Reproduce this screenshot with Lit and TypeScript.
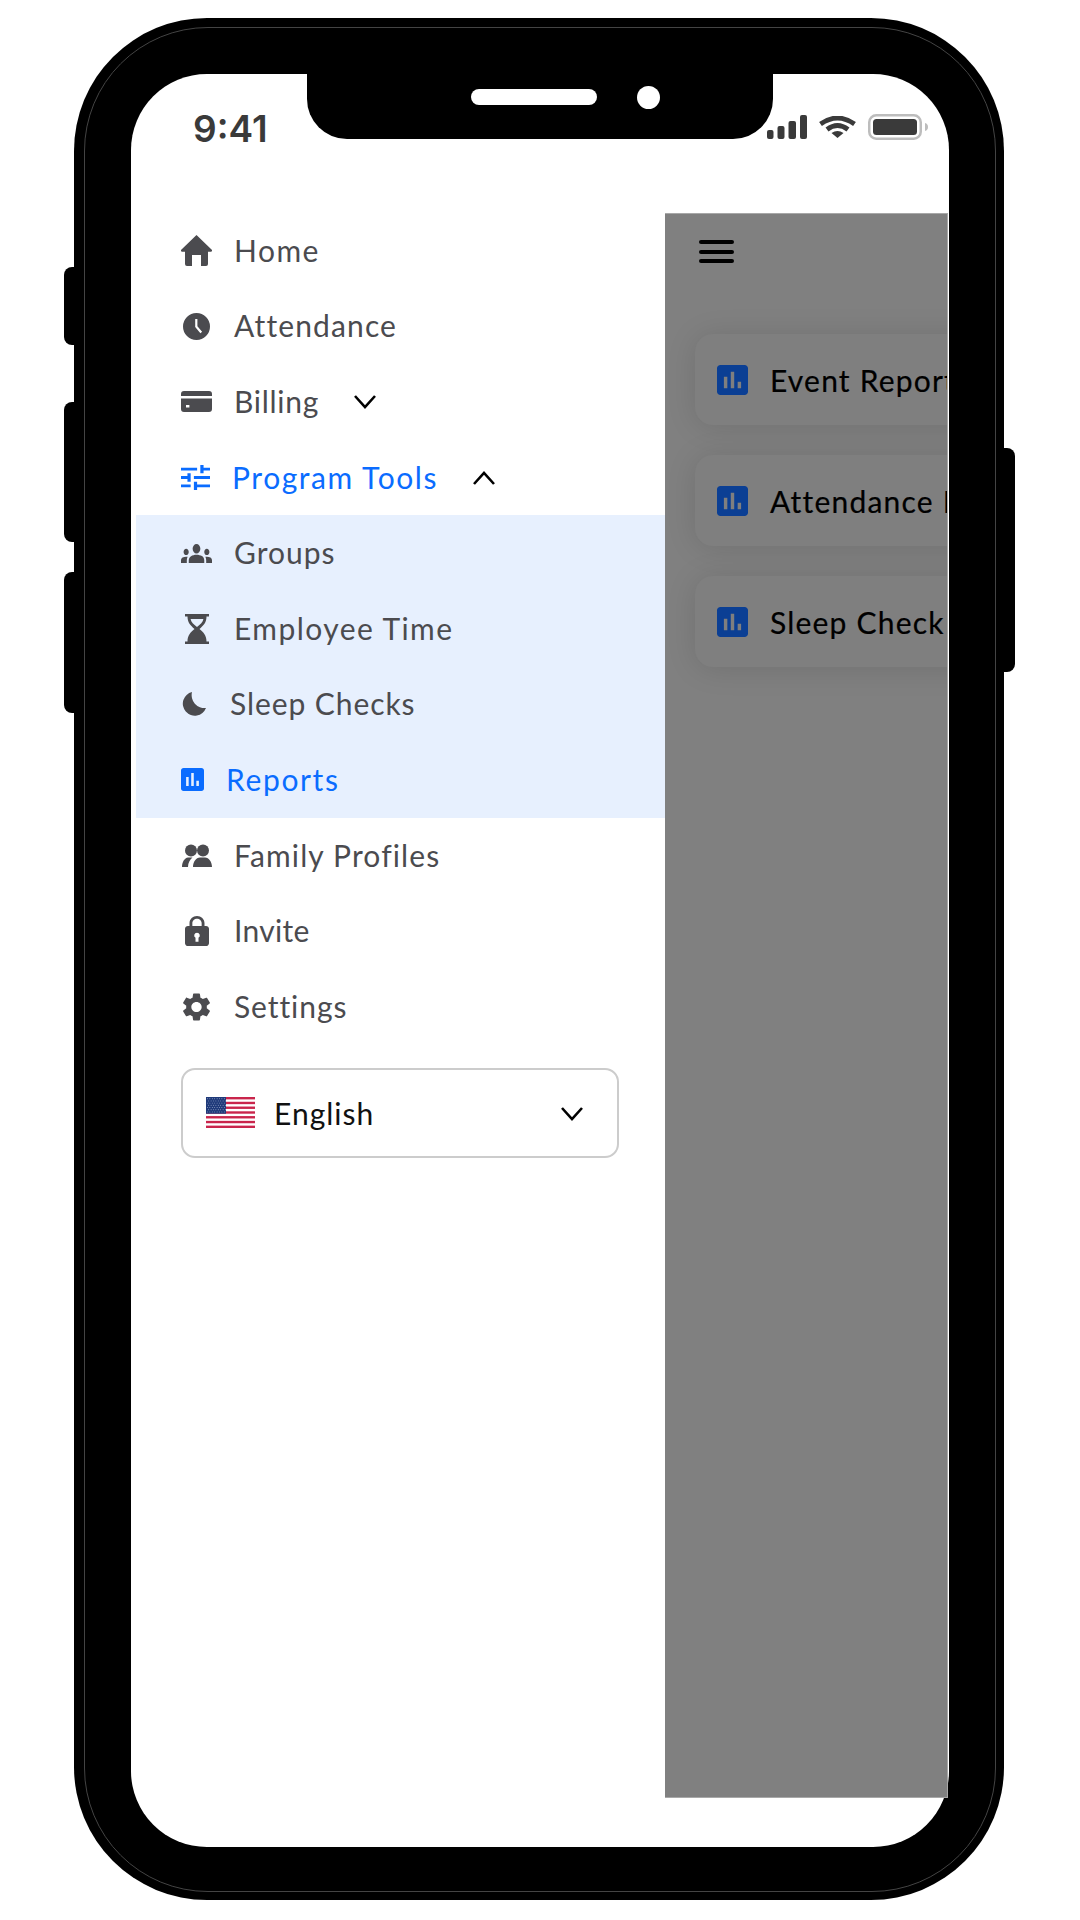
import { LitElement, html, css, svg } from 'lit';
import { customElement } from 'lit/decorators.js';

const homeIcon = svg`<path d="M15.500 0 30.500 14.500a1.200 1.200 0 0 1-.9 2.200H27V29a2 2 0 0 1-2 2h-5V20h-9v11H6a2 2 0 0 1-2-2V16.700H1.400a1.200 1.200 0 0 1-.9-2.200z"/>`;
const clockIcon = svg`<path fill-rule="evenodd" d="M13.500 0a13.500 13.500 0 1 0 0 27 13.500 13.500 0 0 0 0-27zM12.200 6h2.200v7.200l4.700 5.600-1.700 1.400-5.200-6.200z"/>`;
const cardIcon = svg`<path fill-rule="evenodd" d="M3 0h25a3 3 0 0 1 3 3v15a3 3 0 0 1-3 3H3a3 3 0 0 1-3-3V3a3 3 0 0 1 3-3zM0 5v2.600h31V5zM5 14v2.600h3.400V14z"/>`;
const tuneIcon = svg`<path d="M3 17v2h6v-2H3zM3 5v2h10V5H3zm10 16v-2h8v-2h-8v-2h-2v6h2zM7 9v2H3v2h4v2h2V9H7zm14 4v-2H11v2h10zm-6-4h2V7h4V5h-4V3h-2v6z"/>`;
const groupsIcon = svg`<path d="M12 12.750c1.630 0 3.070.39 4.240.9 1.080.48 1.760 1.560 1.760 2.730V18H6v-1.610c0-1.180.68-2.260 1.760-2.730 1.170-.52 2.610-.91 4.240-.91zM4 13c1.100 0 2-.9 2-2s-.9-2-2-2-2 .9-2 2 .9 2 2 2zm1.130 1.100c-.37-.06-.74-.1-1.130-.1-.99 0-1.930.21-2.780.58C.48 14.900 0 15.620 0 16.430V18h4.500v-1.610c0-.83.23-1.610.63-2.290zM20 13c1.100 0 2-.9 2-2s-.9-2-2-2-2 .9-2 2 .9 2 2 2zm4 3.430c0-.81-.48-1.530-1.220-1.850-.85-.37-1.790-.58-2.780-.58-.39 0-.76.04-1.130.1.4.68.63 1.460.63 2.290V18H24v-1.570zM12 6c1.660 0 3 1.340 3 3s-1.340 3-3 3-3-1.340-3-3 1.340-3 3-3z"/>`;
const hourglassIcon = svg`<path fill-rule="evenodd" d="M0 0h24v2.600H0zM0 27.400h24V30H0zM2.500 2.600h19c0 6-3 9-7 12.400 4 3.400 7 6.400 7 12.400h-19c0-6 3-9 7-12.400-4-3.400-7-6.400-7-12.400zM5.600 5c.5 3 3 5.500 6.400 8 3.400-2.500 5.900-5 6.400-8z"/>`;
const moonIcon = svg`<path d="M10 0A12 12 0 1 0 24 16 13 13 0 0 1 10 0z"/>`;
const pollIcon = svg`<path d="M19 3H5c-1.100 0-2 .9-2 2v14c0 1.100.9 2 2 2h14c1.100 0 2-.9 2-2V5c0-1.100-.9-2-2-2zM9 17H7v-7h2v7zm4 0h-2V7h2v10zm4 0h-2v-4h2v4z"/>`;
const peopleIcon = svg`<circle cx="9" cy="6.500" r="6"/><circle cx="21" cy="6.500" r="6"/><path d="M11 23c0-5 3-9.500 7-9.500h5c4 0 7 4.500 7 9.500zM0 23c0-5 2.500-9 6-9.500h4.500c-2.500 2-4.500 5.500-4.500 9.500z"/>`;
const lockIcon = svg`<path fill-rule="evenodd" d="M18 8h-1V6c0-2.760-2.240-5-5-5S7 3.240 7 6v2H6c-1.100 0-2 .9-2 2v10c0 1.100.9 2 2 2h12c1.100 0 2-.9 2-2V10c0-1.100-.9-2-2-2zM15.100 8H8.900V6c0-1.710 1.390-3.100 3.100-3.100 1.710 0 3.100 1.390 3.100 3.100zM12 12.800a1.900 1.900 0 0 0-1 3.500V19h2v-2.700a1.900 1.900 0 0 0-1-3.500z"/>`;
const gearIcon = svg`<path d="M19.140 12.940c.04-.3.06-.61.06-.94 0-.32-.02-.64-.07-.94l2.030-1.580c.18-.14.23-.41.12-.61l-1.920-3.320c-.12-.22-.37-.29-.59-.22l-2.390.96c-.5-.38-1.030-.7-1.620-.94l-.36-2.540c-.04-.24-.24-.41-.48-.41h-3.840c-.24 0-.43.17-.47.41l-.36 2.540c-.59.24-1.130.57-1.620.94l-2.390-.96c-.22-.08-.47 0-.59.22L2.740 8.870c-.12.21-.08.47.12.61l2.030 1.580c-.05.3-.09.63-.09.94s.02.64.07.94l-2.030 1.580c-.18.14-.23.41-.12.61l1.920 3.320c.12.22.37.29.59.22l2.390-.96c.5.38 1.030.7 1.620.94l.36 2.540c.05.24.24.41.48.41h3.840c.24 0 .44-.17.47-.41l.36-2.540c.59-.24 1.130-.56 1.620-.94l2.390.96c.22.08.47 0 .59-.22l1.920-3.320c.12-.22.07-.47-.12-.61l-2.010-1.580zM12 15.600c-1.980 0-3.600-1.620-3.600-3.600s1.620-3.600 3.600-3.600 3.600 1.620 3.600 3.600-1.620 3.600-3.600 3.600z"/>`;

interface MenuItem {
  label: string;
  icon: unknown;
  view: string;
  w: number;
  h: number;
  ls: number; // letter spacing per label, the reference font runs wider than Lato
  box?: number;
  active?: boolean;
  chevron?: 'up' | 'down';
}

const topItems: MenuItem[] = [
  { label: 'Home', icon: homeIcon, view: '0 0 31 31', w: 31, h: 31, ls: 1.47 },
  { label: 'Attendance', icon: clockIcon, view: '0 0 27 27', w: 27, h: 27, ls: 1.13 },
  { label: 'Billing', icon: cardIcon, view: '0 0 31 21', w: 31, h: 21, ls: 0.71, chevron: 'down' },
  { label: 'Program Tools', icon: tuneIcon, view: '3 3 18 18', w: 29, h: 25, ls: 1.56, box: 29, active: true, chevron: 'up' },
];

const subItems: MenuItem[] = [
  { label: 'Groups', icon: groupsIcon, view: '0 6 24 12', w: 31, h: 19, ls: 1 },
  { label: 'Employee Time', icon: hourglassIcon, view: '0 0 24 30', w: 24, h: 30, ls: 1.43 },
  { label: 'Sleep Checks', icon: moonIcon, view: '0 0 25 24', w: 25, h: 24, ls: 0.92, box: 27 },
  { label: 'Reports', icon: pollIcon, view: '3 3 18 18', w: 23, h: 23, ls: 1.64, box: 23, active: true },
];

const bottomItems: MenuItem[] = [
  { label: 'Family Profiles', icon: peopleIcon, view: '0 0 30 23', w: 30, h: 23, ls: 1.13 },
  { label: 'Invite', icon: lockIcon, view: '4 1 16 21', w: 24, h: 30, ls: 0.3 },
  { label: 'Settings', icon: gearIcon, view: '2.600 2 18.800 20', w: 27, h: 28, ls: 0.92 },
];

const reports = ['Event Report', 'Attendance Report', 'Sleep Check Report'];

@customElement('app-root')
export class AppRoot extends LitElement {
  static styles = css`
    :host {
      display: block;
      width: 1080px;
      height: 1920px;
      box-sizing: border-box;
      padding: 18px 0 0 74px;
      background: #fff;
      overflow: hidden;
      font-family: 'Lato', 'Noto Sans', sans-serif;
    }
    .phone {
      position: relative;
      box-sizing: border-box;
      width: 930px;
      height: 1882px;
      padding: 56px 55px 53px 57px;
      background: #000;
      border-radius: 133px;
    }
    .ring {
      position: absolute;
      inset: 9px 8px 8px 10px;
      border: 1px solid #444;
      border-radius: 124px;
    }
    .key {
      position: absolute;
      background: #000;
    }
    .key.left {
      left: -10px;
      width: 12px;
      border-radius: 8px 0 0 8px;
    }
    .key.right {
      right: -11px;
      top: 430px;
      width: 13px;
      height: 224px;
      border-radius: 0 8px 8px 0;
    }
    .key.mute { top: 249px; height: 78px; }
    .key.up { top: 384px; height: 140px; }
    .key.down { top: 554px; height: 141px; }
    .notch {
      position: absolute;
      z-index: 2;
      top: 56px;
      left: 233px;
      box-sizing: border-box;
      width: 466px;
      height: 65px;
      padding: 0 0 19px 164px;
      display: flex;
      align-items: center;
      gap: 40px;
      background: #000;
      border-radius: 0 0 40px 40px;
    }
    .speaker {
      width: 126px;
      height: 16px;
      background: #fff;
      border-radius: 8px;
    }
    .camera {
      width: 23px;
      height: 23px;
      background: #fff;
      border-radius: 50%;
    }
    .screen {
      position: relative;
      height: 100%;
      display: flex;
      flex-direction: column;
      background: #fff;
      border-radius: 76px;
    }
    .status {
      box-sizing: border-box;
      flex: 0 0 139px;
      display: flex;
      justify-content: space-between;
      align-items: flex-start;
      padding: 36px 21px 0 62px;
    }
    .time {
      font-family: 'Inter', sans-serif;
      font-size: 37px;
      line-height: 38px;
      font-weight: 600;
      color: #3a3a3a;
    }
    .indicators {
      display: flex;
      align-items: center;
      gap: 11px;
      margin-top: 4px;
    }
    .body {
      flex: 0 0 1585px;
      display: flex;
    }
    .sidebar {
      box-sizing: border-box;
      flex: 0 0 534px;
      padding-left: 5px;
    }
    .row {
      height: 75.6px;
      display: flex;
      align-items: center;
      padding-left: 45px;
      font-size: 30px;
      color: #4b4b4f;
      white-space: nowrap;
    }
    .row.active {
      color: #0a6cff;
    }
    .label {
      padding-bottom: 2px;
    }
    .ico {
      display: flex;
      justify-content: center;
      margin-right: 22px;
      fill: currentColor;
    }
    .sub {
      background: #e7f0fe;
    }
    .chevron {
      margin-left: 35px;
      fill: none;
      stroke: #000;
      stroke-width: 2.600;
    }
    .language {
      box-sizing: border-box;
      width: 438px;
      height: 90px;
      margin: 23px 0 0 45px;
      padding: 0 34px 0 23px;
      display: flex;
      align-items: center;
      gap: 19px;
      border: 2px solid #ccc;
      border-radius: 14px;
      font-size: 30px;
      letter-spacing: 1px;
      color: #111;
    }
    .language .chevron {
      margin-left: auto;
      margin-top: 2px;
    }
    .overlay {
      box-sizing: border-box;
      flex: 0 0 283px;
      padding: 26px 0 0 30px;
      background: #808080;
      border: 1px solid #a8a8a8;
      border-left: none;
      overflow: hidden;
    }
    .burger {
      display: flex;
      flex-direction: column;
      gap: 5.500px;
      width: 35px;
      margin: 0 0 71px 4px;
    }
    .burger span {
      height: 4px;
      background: #000;
      border-radius: 2px;
    }
    .cards {
      display: flex;
      flex-direction: column;
      gap: 30px;
    }
    .card {
      box-sizing: border-box;
      width: 520px;
      height: 91px;
      padding-left: 22px;
      display: flex;
      align-items: center;
      gap: 22px;
      background: #7f7f7f;
      border-radius: 18px;
      box-shadow: 0 2px 30px rgba(0, 0, 0, 0.12);
      font-size: 30px;
      letter-spacing: 1.2px;
      color: #000;
      white-space: nowrap;
      -webkit-text-stroke: 0.2px #000;
    }
    .card svg {
      fill: #0b3f94;
      flex: none;
    }
  `;

  renderChevron(dir: 'up' | 'down') {
    return html`<svg class="chevron" width="22" height="14" viewBox="0 0 22 14">
      <path d=${dir === 'up' ? 'M1 13 11 2l10 11' : 'M1 1l10 11L21 1'} />
    </svg>`;
  }

  renderRow(item: MenuItem) {
    return html`<div class="row ${item.active ? 'active' : ''}">
      <span class="ico" style="width:${item.box ?? 31}px">
        <svg width=${item.w} height=${item.h} viewBox=${item.view} preserveAspectRatio="none">${item.icon}</svg>
      </span>
      <span class="label" style="letter-spacing:${item.ls}px">${item.label}</span>
      ${item.chevron ? this.renderChevron(item.chevron) : ''}
    </div>`;
  }

  renderFlag() {
    const stripes = [0, 1, 2, 3, 4, 5, 6];
    const stars: { x: number; y: number }[] = [];
    for (let r = 0; r < 7; r++) {
      for (let c = 0; c < 8; c++) {
        stars.push({ x: 1.5 + c * 2.4 + (r % 2) * 1.2, y: 1.7 + r * 2.2 });
      }
    }
    return html`<svg width="49" height="31" viewBox="0 0 49 31">
      <rect width="49" height="31" fill="#fff" />
      ${stripes.map((i) => svg`<rect y=${i * 4.77} width="49" height="2.385" fill="#c9254c" />`)}
      <rect width="20" height="16.7" fill="#1f3a7a" />
      ${stars.map((s) => svg`<circle cx=${s.x} cy=${s.y} r="0.45" fill="#cdd5ea" />`)}
    </svg>`;
  }

  render() {
    return html`
      <div class="phone">
        <div class="key left mute"></div>
        <div class="key left up"></div>
        <div class="key left down"></div>
        <div class="key right"></div>
        <div class="ring"></div>
        <div class="notch">
          <div class="speaker"></div>
          <div class="camera"></div>
        </div>
        <div class="screen">
          <div class="status">
            <span class="time">9:41</span>
            <div class="indicators">
              <svg width="40" height="24" viewBox="0 0 40 24" fill="#3a3a3a">
                <rect x="0" y="15" width="6.5" height="9" rx="2" />
                <rect x="10.5" y="11" width="7" height="13" rx="2" />
                <rect x="21.5" y="6" width="7.5" height="18" rx="2" />
                <rect x="33" y="0" width="7" height="24" rx="2" />
              </svg>
              <svg width="39" height="22" viewBox="0 0 38 22" fill="none" stroke="#3a3a3a">
                <path stroke-width="4.8" d="M2 8Q19-4 36 8" />
                <path stroke-width="4.8" d="M8.5 13.5Q19 5.5 29.500 13.5" />
                <path fill="#3a3a3a" stroke="none" d="M13 17Q19 13 25 17L19 22z" />
              </svg>
              <svg width="60" height="26" viewBox="0 0 60 26">
                <rect x="1.25" y="1.25" width="51.5" height="23.5" rx="7" fill="none" stroke="#bdbdbd" stroke-width="2.5" />
                <rect x="5" y="5" width="44" height="16" rx="3.5" fill="#3a3a3a" />
                <path fill="#bdbdbd" d="M57 9c2 .5 3 2 3 4s-1 3.5-3 4z" />
              </svg>
            </div>
          </div>
          <div class="body">
            <nav class="sidebar">
              ${topItems.map((i) => this.renderRow(i))}
              <div class="sub">${subItems.map((i) => this.renderRow(i))}</div>
              ${bottomItems.map((i) => this.renderRow(i))}
              <div class="language">
                ${this.renderFlag()}
                <span>English</span>
                ${this.renderChevron('down')}
              </div>
            </nav>
            <div class="overlay">
              <div class="burger"><span></span><span></span><span></span></div>
              <div class="cards">
                ${reports.map(
                  (name) => html`<div class="card">
                    <svg width="31" height="30" viewBox="3 3 18 18" preserveAspectRatio="none">${pollIcon}</svg>
                    <span>${name}</span>
                  </div>`
                )}
              </div>
            </div>
          </div>
        </div>
      </div>
    `;
  }
}
